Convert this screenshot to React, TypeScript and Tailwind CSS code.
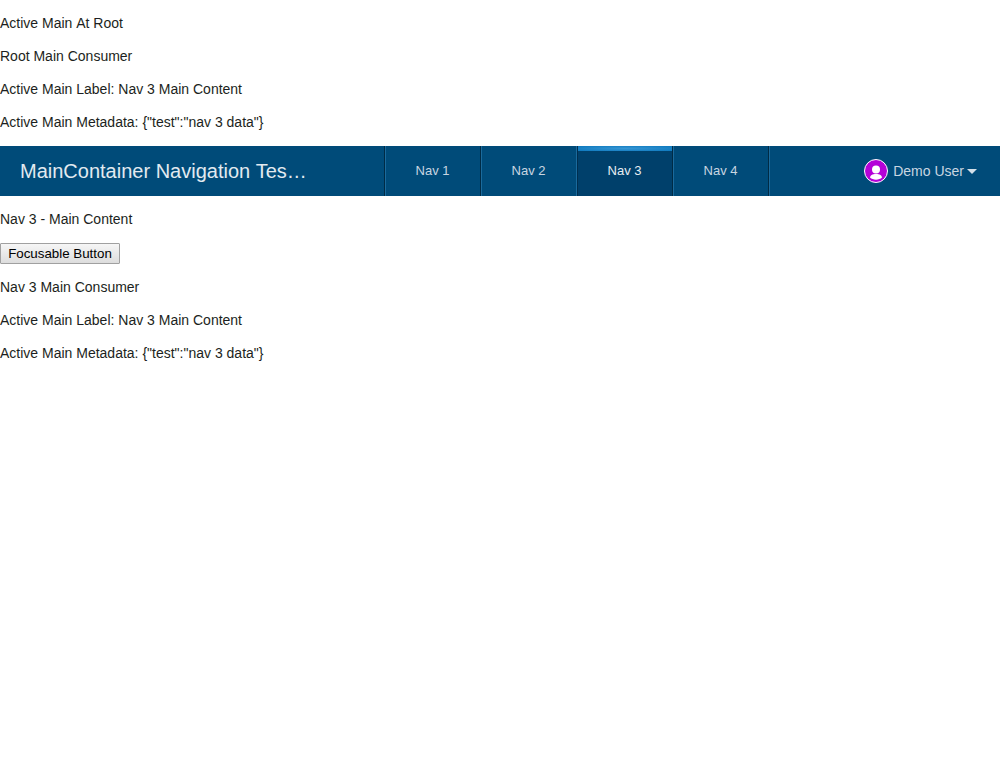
import type { ReactNode } from 'react';

const tabs = ['Nav 1', 'Nav 2', 'Nav 3', 'Nav 4'];

function Info({ children }: { children: ReactNode }) {
  return <p className="mb-3.5 h-[19px] leading-[19px]">{children}</p>;
}

function Tab({ label, active }: { label: string; active: boolean }) {
  return (
    <button
      className={
        active
          ? 'relative h-full w-24 border-r border-[#002b45] bg-[#00406b] text-[#e6edf2] shadow-[inset_1px_0_0_#002f4f]'
          : 'relative h-full w-24 border-r border-[#002b45] text-[#c8d6e1] shadow-[inset_1px_0_0_#1b6a9c] nth-2:border-[#1b6a9c]'
      }
    >
      {active && (
        <span className="absolute top-0 right-0 left-px h-[5px] bg-[radial-gradient(ellipse_at_center,#3796d4,#0c78bd)]" />
      )}
      <span>{label}</span>
    </button>
  );
}

export default function App() {
  return (
    <div className="min-h-screen bg-white pt-3.5 font-['Liberation_Sans',Arial,sans-serif] text-[14px] text-[#1c1f21]">
      <Info>
        Active Main <span className="inline-block">At Root</span>
      </Info>
      <Info>Root Main Consumer</Info>
      <Info>Active Main Label: Nav 3 Main Content</Info>
      <Info>{'Active Main Metadata: {"test":"nav 3 data"}'}</Info>
      <header className="mb-3.5 flex h-[50px] items-center bg-[#004b79]">
        <div className="w-96 pl-5">
          <h1 className="w-72 truncate text-[20px] leading-[30px] text-[#e2eaf0]">
            MainContainer Navigation <span className="inline-block">Tes…</span>
          </h1>
        </div>
        <nav className="flex h-full border-l border-[#002b45] text-[13px]">
          {tabs.map((t) => (
            <Tab key={t} label={t} active={t === 'Nav 3'} />
          ))}
          <span className="w-px bg-[#1b6a9c]" />
        </nav>
        <div className="mr-[23px] ml-auto flex items-center text-[#c8d6e1]">
          <svg className="mr-[5px] size-6" viewBox="0 0 24 24">
            <circle cx="12" cy="12" r="11.5" fill="#b400d8" stroke="#fff" />
            <circle cx="12" cy="10.5" r="4" fill="#fff" />
            <path d="M6 18.6c0-2.2 2.4-3.7 6-3.7s6 1.5 6 3.7c-1.6 1.4-3.6 2.1-6 2.1s-4.4-.7-6-2.1z" fill="#fff" />
          </svg>
          <span>Demo User</span>
          <svg className="ml-[3px] h-[5px] w-2.5" viewBox="0 0 10 5">
            <path d="M0 0h10L5 5z" fill="#d4e0e9" />
          </svg>
        </div>
      </header>
      <Info>Nav 3 - Main Content</Info>
      <button className="mb-3.5 block h-[21px] w-[120px] rounded-[1px] border border-[#a0a0a0] bg-linear-to-b from-[#f6f6f6] to-[#dddddd] text-[13.333px] leading-[19px] text-black">
        Focusable Button
      </button>
      <Info>Nav 3 Main Consumer</Info>
      <Info>Active Main Label: Nav 3 Main Content</Info>
      <Info>{'Active Main Metadata: {"test":"nav 3 data"}'}</Info>
    </div>
  );
}
